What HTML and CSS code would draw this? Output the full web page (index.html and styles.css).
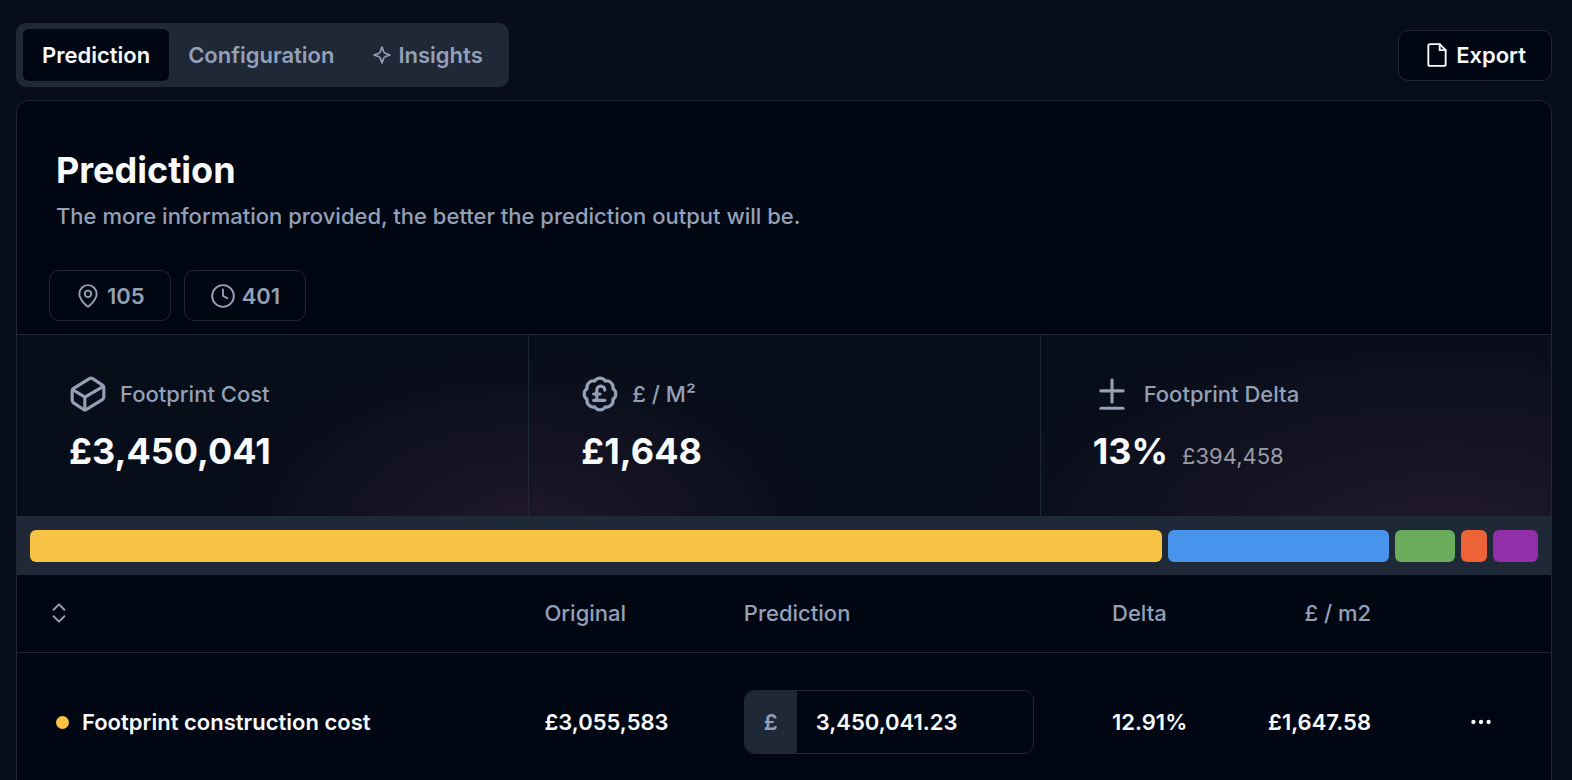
FILE: index.html
```
<!DOCTYPE html>
<html lang="en">
<head>
    <meta charset="UTF-8">
    <meta name="viewport" content="width=device-width, initial-scale=1.0">
    <title>Prediction</title>
    <link rel="stylesheet" href="styles.css">
</head>
<body>

    <div class="page">
        <header class="toolbar">
            <div class="tabs" role="tablist">
                <button type="button" class="tab active" role="tab" aria-selected="true">Prediction</button>
                <button type="button" class="tab" role="tab" aria-selected="false">Configuration</button>
                <button type="button" class="tab" role="tab" aria-selected="false">
                    <svg class="icon-spark" viewBox="0 0 24 24"><path d="M12 2.5 14.2 8.4a2.2 2.2 0 0 0 1.4 1.4L21.5 12l-5.9 2.2a2.2 2.2 0 0 0-1.4 1.4L12 21.5l-2.2-5.9a2.2 2.2 0 0 0-1.4-1.4L2.5 12l5.9-2.2a2.2 2.2 0 0 0 1.4-1.4Z"/></svg>
                    Insights
                </button>
            </div>
            <button type="button" class="btn btn-export">
                <svg class="icon" viewBox="0 0 24 24"><path d="M14.5 2H5.5a1.5 1.5 0 0 0-1.5 1.5v17a1.5 1.5 0 0 0 1.5 1.5h13a1.5 1.5 0 0 0 1.5-1.5V7.5L14.5 2z"/><path d="M14.5 2v5.5H20"/></svg>
                Export
            </button>
        </header>

        <main class="card">
            <div class="card-header">
                <h1>Prediction</h1>
                <p>The more information provided, the better the prediction output will be.</p>
            </div>

            <div class="chips">
                <button type="button" class="btn">
                    <svg class="icon" viewBox="0 0 24 24"><path d="M20 10c0 6-8 12-8 12s-8-6-8-12a8 8 0 0 1 16 0Z"/><circle cx="12" cy="10" r="3"/></svg>
                    105
                </button>
                <button type="button" class="btn">
                    <svg class="icon" viewBox="0 0 24 24"><circle cx="12" cy="12" r="10"/><path d="M12 6v6l4 2"/></svg>
                    401
                </button>
            </div>

            <section class="stats">
                <div class="stat">
                    <div class="stat-label">
                        <svg class="icon-lg" viewBox="0 0 24 24"><path d="m21.12 6.4-6.05-4.06a2 2 0 0 0-2.17-.05L2.95 8.41a2 2 0 0 0-.95 1.7v5.82a2 2 0 0 0 .88 1.66l6.05 4.07a2 2 0 0 0 2.17.05l9.95-6.12a2 2 0 0 0 .95-1.7V8.06a2 2 0 0 0-.88-1.66Z"/><path d="M10 22v-8L2.25 9.15"/><path d="m10 14 11.77-6.87"/></svg>
                        Footprint Cost
                    </div>
                    <div class="stat-value">£3,450,041</div>
                </div>
                <div class="stat">
                    <div class="stat-label">
                        <svg class="icon-lg" viewBox="0 0 24 24"><path d="M3.85 8.62a4 4 0 0 1 4.78-4.77 4 4 0 0 1 6.74 0 4 4 0 0 1 4.78 4.78 4 4 0 0 1 0 6.74 4 4 0 0 1-4.77 4.78 4 4 0 0 1-6.75 0 4 4 0 0 1-4.78-4.77 4 4 0 0 1 0-6.76Z"/><path d="M8 12h4"/><path d="M10 16V9.5a2.5 2.5 0 0 1 5 0"/><path d="M8 16h7"/></svg>
                        £ / M²
                    </div>
                    <div class="stat-value">£1,648</div>
                </div>
                <div class="stat">
                    <div class="stat-label">
                        <svg class="icon-lg" viewBox="0 0 24 24"><path d="M12 3v14"/><path d="M5 10h14"/><path d="M5 21h14"/></svg>
                        Footprint Delta
                    </div>
                    <div class="stat-value">13% <span class="stat-note">£394,458</span></div>
                </div>
            </section>

            <!-- Cost breakdown -->
            <div class="breakdown">
                <div class="segment yellow" style="flex-grow: 1132"></div>
                <div class="segment blue" style="flex-grow: 221"></div>
                <div class="segment green" style="flex-grow: 60"></div>
                <div class="segment orange" style="flex-grow: 26"></div>
                <div class="segment purple" style="flex-grow: 45"></div>
            </div>

            <table class="costs">
                <colgroup>
                    <col>
                    <col class="col-original">
                    <col class="col-prediction">
                    <col class="col-delta">
                    <col class="col-rate">
                    <col class="col-actions">
                </colgroup>
                <thead>
                    <tr>
                        <th scope="col">
                            <button type="button" class="icon-btn" aria-label="Sort">
                                <svg class="icon" viewBox="0 0 24 24"><path d="m7 15 5 5 5-5"/><path d="m7 9 5-5 5 5"/></svg>
                            </button>
                        </th>
                        <th scope="col">Original</th>
                        <th scope="col">Prediction</th>
                        <th scope="col">Delta</th>
                        <th scope="col" class="right">£ / m2</th>
                        <td></td>
                    </tr>
                </thead>
                <tbody>
                    <tr>
                        <td>
                            <div class="name">
                                <span class="dot"></span>
                                <label for="footprintCost">Footprint construction cost</label>
                            </div>
                        </td>
                        <td>£3,055,583</td>
                        <td>
                            <div class="money">
                                <span class="money-prefix">£</span>
                                <input type="text" id="footprintCost" name="footprintCost" value="3,450,041.23">
                            </div>
                        </td>
                        <td>12.91%</td>
                        <td class="right">£1,647.58</td>
                        <td>
                            <button type="button" class="icon-btn more" aria-label="More actions">
                                <svg class="icon icon-dots" viewBox="0 0 24 24"><circle cx="5" cy="12" r="1"/><circle cx="12" cy="12" r="1"/><circle cx="19" cy="12" r="1"/></svg>
                            </button>
                        </td>
                    </tr>
                </tbody>
            </table>
        </main>
    </div>

</body>
</html>
```
FILE: styles.css
```
* {
    box-sizing: border-box;
}

body {
    margin: 0;
    font-family: Inter, "Liberation Sans", sans-serif;
    font-size: 22px;
    line-height: 32px;
    font-weight: 600;
    color: #f8fafc;
    background-color: #070d19;
}

button,
input {
    font: inherit;
    color: inherit;
}

button {
    cursor: pointer;
}

svg {
    flex: none;
    fill: none;
    stroke: currentColor;
    stroke-width: 2;
    stroke-linecap: round;
    stroke-linejoin: round;
}

.page {
    height: 100vh;
    padding: 23px 20px 0 16px;
    overflow: hidden;
}

.toolbar {
    display: flex;
    justify-content: space-between;
    align-items: center;
    margin-bottom: 13px;
}

.tabs {
    display: flex;
    padding: 6px 7px;
    border-radius: 10px;
    background-color: #1f2837;
}

.tab {
    display: flex;
    align-items: center;
    gap: 6px;
    height: 52px;
    padding: 0 19px;
    border: none;
    border-radius: 6px;
    background: none;
    color: #94a0b6;
}

.tab.active {
    background-color: #010613;
    color: #f8fafc;
}

.btn {
    display: flex;
    align-items: center;
    gap: 6px;
    height: 51px;
    padding: 0 25px;
    border: 1px solid #1f2837;
    border-radius: 10px;
    background-color: #010613;
    color: #94a0b6;
}

.btn-export {
    color: #f8fafc;
}

.icon {
    width: 26px;
    height: 26px;
    stroke-width: 1.75;
}

.icon-spark {
    width: 20px;
    height: 20px;
}

.icon-lg {
    width: 38px;
    height: 38px;
}

.icon-dots {
    stroke-width: 2;
}

.card {
    border: 1px solid #1f2837;
    border-radius: 13px;
    background-color: #010613;
    overflow: hidden;
}

.card-header {
    padding: 45px 39px 38px;
}

h1 {
    margin: 0 0 6px;
    font-size: 36px;
    line-height: 48px;
    font-weight: 700;
}

p {
    margin: 0;
    font-weight: 500;
    color: #94a0b6;
}

.chips {
    display: flex;
    gap: 13px;
    padding: 0 32px 13px;
}

.stats {
    display: grid;
    grid-template-columns: repeat(3, 1fr);
    border-top: 1px solid #1f2837;
    background-color: #070d19;
    background-image:
        radial-gradient(ellipse 300px 180px at 33% 110%, #20182a, transparent),
        radial-gradient(ellipse 480px 220px at 93% 114%, #21192c, transparent);
}

.stat {
    padding: 40px 52px 39px;
}

.stat + .stat {
    border-left: 1px solid #1f2837;
}

.stat-label {
    display: flex;
    align-items: center;
    gap: 13px;
    height: 38px;
    margin-bottom: 13px;
    font-weight: 500;
    color: #94a0b6;
}

.stat-value {
    display: flex;
    align-items: baseline;
    gap: 14px;
    font-size: 36px;
    line-height: 51px;
    font-weight: 700;
}

.stat-note {
    font-size: 22px;
    line-height: 32px;
    font-weight: 400;
    color: #9b9ba7;
}

.breakdown {
    display: flex;
    gap: 6px;
    padding: 13px;
    border-top: 1px solid #1f2837;
    background-color: #1f2837;
}

.segment {
    flex-basis: 0;
    height: 32px;
    border-radius: 6px;
}

.yellow {
    background-color: #f6c344;
}

.blue {
    background-color: #4894ed;
}

.green {
    background-color: #69ad5c;
}

.orange {
    background-color: #ec6337;
}

.purple {
    background-color: #902fa8;
}

.costs {
    width: 100%;
    table-layout: fixed;
    border-collapse: collapse;
}

.col-original {
    width: 13%;
}

.col-prediction {
    width: 24%;
}

.col-delta {
    width: 136px;
}

.col-rate {
    width: 175px;
}

.col-actions {
    width: 154px;
}

th,
.costs td {
    padding: 0 26px;
    text-align: left;
}

th {
    height: 77px;
    font-weight: 500;
    color: #94a0b6;
}

thead tr {
    border-bottom: 1px solid #1f2837;
}

.costs tbody td {
    height: 140px;
}

.costs .right {
    text-align: right;
}

.icon-btn {
    display: flex;
    padding: 3px;
    border: none;
    background: none;
}

.more {
    margin-left: auto;
    padding: 12px 31px;
}

.name {
    display: flex;
    align-items: center;
    gap: 13px;
    padding-left: 13px;
}

.dot {
    width: 13px;
    height: 13px;
    border-radius: 50%;
    background-color: #f6c344;
}

.money {
    display: flex;
    width: 290px;
    height: 64px;
    border: 1px solid #1f2837;
    border-radius: 10px;
    overflow: hidden;
}

.money-prefix {
    display: flex;
    align-items: center;
    padding: 0 19px;
    background-color: #1f2837;
    color: #94a0b6;
}

.money input {
    flex: 1;
    min-width: 0;
    padding: 0 19px;
    border: none;
    outline: none;
    background: none;
}
```
